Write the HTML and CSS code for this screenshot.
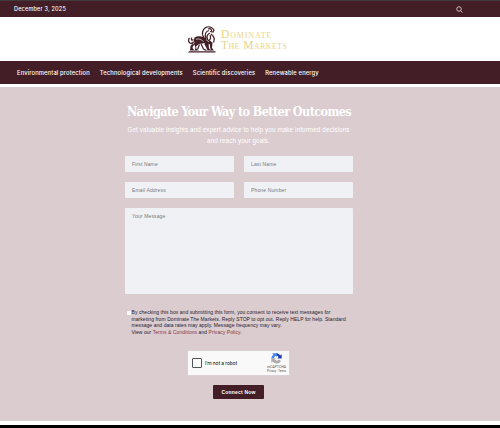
FILE: index.html
```html
<!DOCTYPE html>
<html lang="en">

	<head>
		<meta charset="UTF-8">
		<title>Dominate The Markets</title>
		<link rel="stylesheet" href="styles.css">
	</head>

	<body>
		<header>
			<div class="topbar">
				<span class="date">December 3, 2025</span>
				<svg class="search" viewBox="0 0 14 14">
					<circle cx="6" cy="6" r="4.5" />
					<path d="M9.5 9.5L13 13" />
				</svg>
			</div>
			<a class="logo" href="#">
				<svg class="lion" viewBox="0 0 60 56">
					<path class="base" d="M4 52.500h53v2.500H2z" />
					<path class="fill" d="M15 25c5-3 12-3 18-1l7 3 9 7-3 5-9-3-13 2-6 5 1 5 5 3H15l2-5-2-7-4 5 1 4 4 3H6l1-9 6-8z" />
					<path class="fill" d="M36 33l7 3 1 11 5 4h-8l-3-7-3-5zM46 32l5 3-1 11 4 5h-6l-2-7z" />
					<path class="line" d="M13 34C7 40 1 34 4 28M3 28l2-2M13 29c-4 3-6 0-3-4M34 25c-6-7-3-18 6-21 7-2 11 2 14 6l-2 4-6-1M38 26c-4-7 0-14 6-15M41 29c-2-6 0-11 5-13M48 18c7 5 8 10 5 17M42 8c3-2 8 0 7 4M28 38l5 10 6 3M25 39l-4 10M46 20c2 4 1 9-3 12" />
					<path class="light" d="M18 29c6-3 10 0 15 4M38 29l6 5M15 34l-3 5" />
				</svg>
				<span class="brand">
					<span class="brand-one">Dominate</span>
					<span class="brand-two">The Markets</span>
				</span>
			</a>
			<nav>
				<a href="#">Environmental protection</a>
				<a href="#">Technological developments</a>
				<a href="#">Scientific discoveries</a>
				<a href="#">Renewable energy</a>
			</nav>
		</header>
		<section class="contact">
			<h1>Navigate Your Way to Better Outcomes</h1>
			<p class="intro">Get valuable insights and expert advice to help you make informed decisions<br>and reach your goals.</p>
			<form>
				<div class="fields">
					<input type="text" placeholder="First Name">
					<input type="text" placeholder="Last Name">
					<input type="email" placeholder="Email Address">
					<input type="tel" placeholder="Phone Number">
					<textarea placeholder="Your Message"></textarea>
				</div>
				<div class="consent">
					<input class="check" type="checkbox" id="agree">
					<label for="agree">By checking this box and submitting this form, you consent to receive text messages for<br>marketing from Dominate The Markets. Reply STOP to opt out. Reply HELP for help. Standard<br>message and data rates may apply. Message frequency may vary.<br>View our <a href="#">Terms &amp; Conditions</a> and <a href="#">Privacy Policy.</a></label>
				</div>
				<div class="captcha">
					<span class="robot-box"></span>
					<span class="robot-text">I'm not a robot</span>
					<div class="recaptcha">
						<svg viewBox="0 0 32 32">
							<path fill="#1c3aa9" d="M31 16V3l-4 4C22 1 16 0 15 1v7c4-1 6 1 7 4l-4 4z" />
							<path fill="#4285f4" d="M16 1H4l3 4C3 8 1 12 1 16h8c0-4 1-6 4-7l3 4z" />
							<path fill="#ababab" d="M1 16v13l4-4c7 8 18 7 24-1l-6-5c-4 5-9 4-12 0l4-3z" />
						</svg>
						<span class="rc-name">reCAPTCHA</span>
						<span class="rc-links">Privacy - Terms</span>
					</div>
				</div>
				<button type="button">Connect Now</button>
			</form>
		</section>
		<footer></footer>
	</body>

</html>
```

FILE: styles.css
```css
* {
	margin: 0;
	padding: 0;
	box-sizing: border-box;
}

body {
	width: 500px;
	height: 428px;
	overflow: hidden;
	background-color: #fff;
	font-family: "Liberation Sans", Arial, sans-serif;
}

a {
	text-decoration: none;
}

.topbar {
	height: 17px;
	padding: 0 37px 0 14px;
	display: flex;
	align-items: center;
	justify-content: space-between;
	border-top: 1px solid #403c3e;
	background-color: #431e26;
	color: #fff;
}

.date {
	font: 500 5.5px "Inter", sans-serif;
	letter-spacing: 0.2px;
}

.search {
	width: 7px;
	height: 7px;
	fill: none;
	stroke: #dfd3d5;
	stroke-width: 1.7;
}

.logo {
	height: 44px;
	padding: 0 0 0 187px;
	display: flex;
	align-items: center;
}

.lion {
	width: 30px;
	height: 28px;
}

.lion .fill,
.lion .base {
	fill: #431e26;
}

.lion .line {
	fill: none;
	stroke: #431e26;
	stroke-width: 2.4;
}

.lion .light {
	fill: none;
	stroke: #fff;
	stroke-width: 1.3;
}

.brand {
	margin: 2px 0 0 4px;
	display: flex;
	flex-direction: column;
	font-family: "Liberation Serif", serif;
	font-variant: small-caps;
	font-size: 11.5px;
	line-height: 11px;
	color: #e9d488;
	white-space: nowrap;
}

.brand-one {
	letter-spacing: 0.85px;
}

.brand-two {
	letter-spacing: 0.4px;
}

nav {
	height: 23px;
	padding-left: 17px;
	display: flex;
	align-items: center;
	gap: 10px;
	background-color: #431e26;
}

nav a {
	font: 500 5.8px "Inter", sans-serif;
	letter-spacing: 0.14px;
	color: #fff;
	white-space: nowrap;
}

.contact {
	height: 334px;
	margin-top: 3px;
	padding-top: 16px;
	background-color: #dbcccf;
}

h1 {
	font: bold 12.5px/17px "DejaVu Serif", serif;
	font-stretch: condensed;
	letter-spacing: -0.58px;
	text-align: center;
	color: #fff;
	white-space: nowrap;
	margin-right: 22px;
}

.intro {
	margin: 4px 23px 0 0;
	font-size: 6.3px;
	line-height: 11px;
	letter-spacing: 0.11px;
	text-align: center;
	color: #fff;
}

form {
	width: 228px;
	margin: 10px 0 0 125px;
}

.fields {
	display: grid;
	grid-template-columns: 109px 109px;
	grid-template-rows: 16px 16px 86px;
	gap: 10px;
}

.fields input,
.fields textarea {
	width: 100%;
	height: 100%;
	padding: 0 7px;
	border: none;
	border-radius: 1px;
	outline: none;
	resize: none;
	background-color: #f0f1f5;
	font: 5px "Liberation Sans", sans-serif;
	letter-spacing: 0.14px;
}

.fields textarea {
	grid-column: 1 / 3;
	padding-top: 5px;
}

::placeholder {
	color: #777980;
	opacity: 1;
}

.consent {
	margin: 15px 0 0 2px;
	display: flex;
	font-size: 5px;
	line-height: 6.6px;
	letter-spacing: 0.06px;
	color: #24202e;
	white-space: nowrap;
}

.check {
	width: 4px;
	height: 4px;
	margin: 2px 0.5px 0 0;
	appearance: none;
	border-radius: 1px;
	background-color: #fff;
}

.consent a {
	color: #8d3740;
}

.captcha {
	width: 103px;
	height: 26px;
	margin: 14.6px 0 0 62px;
	padding: 0 3px 0 4px;
	display: flex;
	align-items: center;
	border: 1px solid #d9d2d4;
	background-color: #f9f9f9;
}

.robot-box {
	width: 10px;
	height: 10px;
	border: 1px solid #555;
	border-radius: 1px;
	background-color: #fff;
}

.robot-text {
	margin-left: 3px;
	font: 5px "Roboto", sans-serif;
	color: #111;
}

.recaptcha {
	margin-left: auto;
	display: flex;
	flex-direction: column;
	align-items: center;
	font-family: "Roboto", sans-serif;
	color: #555;
}

.recaptcha svg {
	width: 11px;
	height: 11px;
}

.rc-name {
	margin-top: 1px;
	font-size: 3.5px;
	line-height: 4px;
}

.rc-links {
	font-size: 2.8px;
	line-height: 4px;
}

button {
	display: block;
	width: 51px;
	height: 14px;
	margin: 9px 0 0 88px;
	border: none;
	border-radius: 1px;
	background-color: #431e26;
	color: #fff;
	font: bold 5px "Liberation Sans", sans-serif;
	letter-spacing: 0.2px;
}

footer {
	height: 3px;
	margin-top: 4px;
	background-color: #000;
}
```
